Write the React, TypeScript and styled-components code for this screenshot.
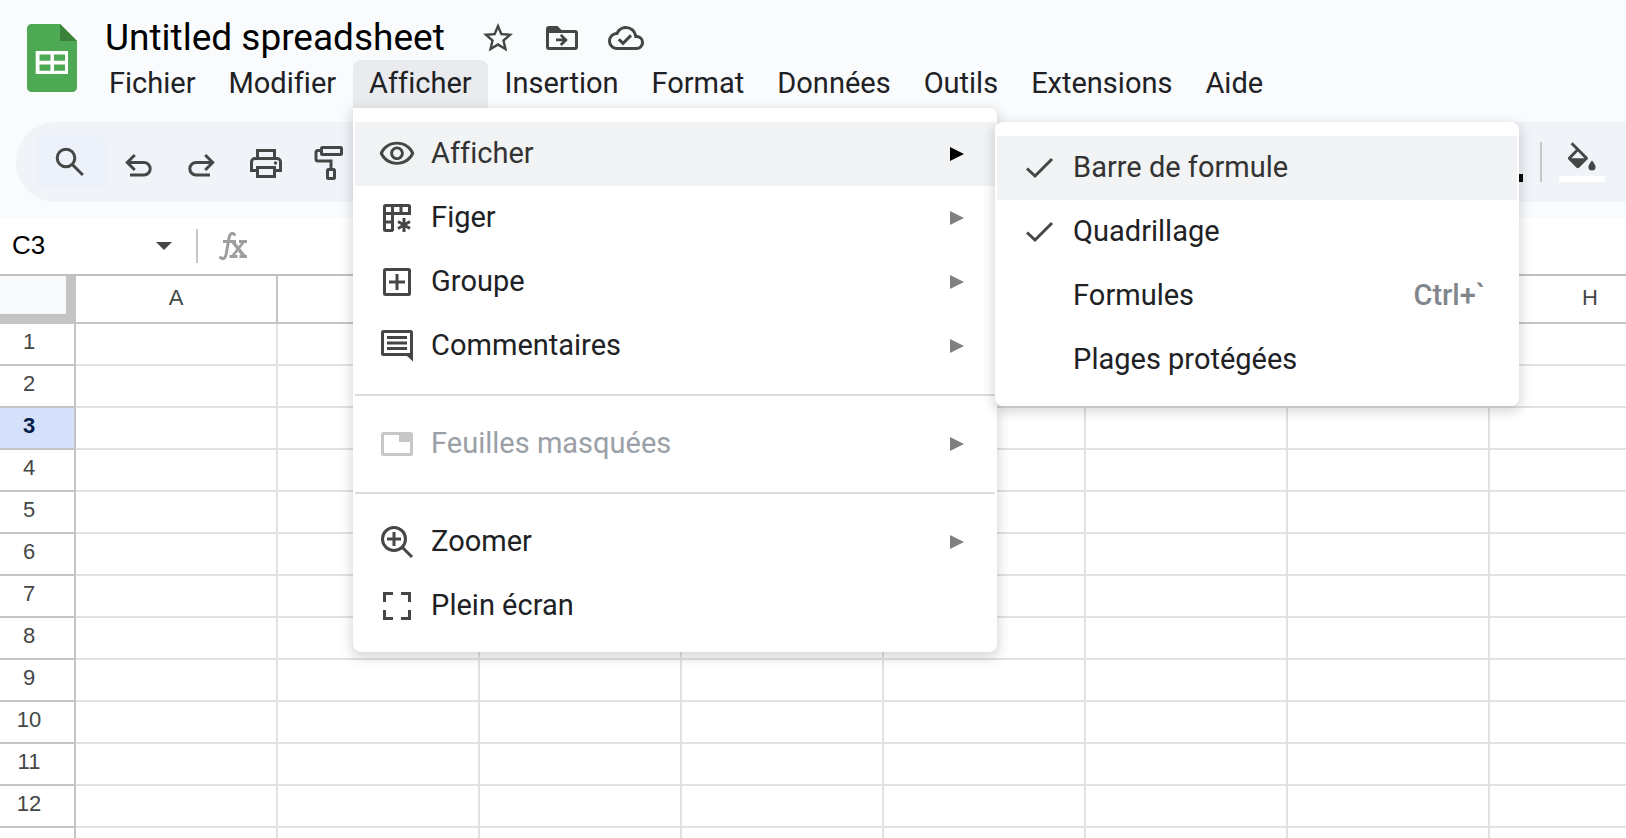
import React from "react";
import styled, { createGlobalStyle } from "styled-components";

const GlobalStyle = createGlobalStyle`
  *, *::before, *::after { box-sizing: border-box; }
  html, body, #root { height: 100%; }
  body {
    margin: 0;
    overflow: hidden;
    background: #ffffff;
    color: #202124;
    font-family: Roboto, "Liberation Sans", Arial, sans-serif;
    font-variant-ligatures: none;
  }
  button, input { font: inherit; color: inherit; font-variant-ligatures: none; }
  button { border: 0; padding: 0; background: none; cursor: pointer; }
  svg { display: block; flex: none; }
`;

const Page = styled.div`
  display: flex;
  flex-direction: column;
  height: 100%;
  overflow: hidden;
`;

const Header = styled.header`
  display: flex;
  align-items: flex-start;
  height: 108px;
  flex: none;
  background: #f9fbfd;
`;

const LogoLink = styled.a`
  display: block;
  padding: 24px 0 0 27px;
  width: 93px;
  flex: none;
`;

const HeaderMain = styled.div`
  display: flex;
  flex-direction: column;
  flex: 1;
  min-width: 0;
`;

const TitleRow = styled.div`
  display: flex;
  align-items: center;
  height: 60px;
  padding: 16px 0 0 12px;
`;

const TitleInput = styled.input`
  width: 366px;
  height: 44px;
  padding: 0;
  border: 0;
  outline: 0;
  background: transparent;
  color: #000000;
  font-size: 37px;
  line-height: 44px;
`;

const TitleActions = styled.div`
  display: flex;
  gap: 28px;
  margin-left: 9px;
  color: #444746;
`;

const MenuBar = styled.nav`
  display: flex;
  gap: 1px;
  height: 48px;
`;

const MenuSlot = styled.div`
  position: relative;
`;

const MenuTab = styled.button<{ $open?: boolean }>`
  height: 48px;
  padding: 0 16px 2px;
  border-radius: 8px 8px 0 0;
  background: ${(p) => (p.$open ? "#e9ebee" : "transparent")};
  font-size: 29px;
  line-height: 44px;
  white-space: nowrap;
`;

const Popup = styled.div<{ $sub?: boolean }>`
  position: absolute;
  z-index: ${(p) => (p.$sub ? 3 : 2)};
  top: ${(p) => (p.$sub ? "14px" : "100%")};
  left: ${(p) => (p.$sub ? "calc(100% - 2px)" : "0")};
  width: ${(p) => (p.$sub ? "524px" : "644px")};
  padding: 14px 2px;
  border-radius: ${(p) => (p.$sub ? "8px" : "0 8px 8px 8px")};
  background: #ffffff;
  box-shadow: 0 4px 12px 2px rgba(60, 64, 67, 0.2);
`;

const Item = styled.button<{ $active?: boolean; $sub?: boolean }>`
  display: flex;
  align-items: center;
  width: 100%;
  height: 64px;
  padding: ${(p) => (p.$sub ? "0 32px 0 24px" : "0 31px 0 24px")};
  background: ${(p) => (p.$active ? "#f1f3f4" : "transparent")};
  color: ${(p) => (p.$active ? "#333333" : "#202124")};
  font-size: 29px;
  line-height: 36px;
  text-align: left;

  &:disabled { color: #9aa0a6; cursor: default; }
`;

const ItemIcon = styled.span<{ $dim?: boolean }>`
  display: flex;
  justify-content: center;
  width: 36px;
  margin-right: 16px;
  color: ${(p) => (p.$dim ? "#c7c7c7" : "#444746")};
`;

const ItemLabel = styled.span`
  flex: 1;
  padding-bottom: 2px;
`;

const Shortcut = styled.span`
  padding-bottom: 2px;
  color: #80868b;
  font-weight: 500;
`;

const Separator = styled.hr`
  height: 2px;
  margin: 16px 0;
  border: 0;
  background: #dadce0;
`;

const ToolbarBand = styled.div`
  flex: none;
  padding: 14px 0 16px 16px;
  background: #f9fbfd;
`;

const Toolbar = styled.div`
  display: flex;
  align-items: center;
  height: 80px;
  padding: 0 21px 0 20px;
  border-radius: 40px 0 0 40px;
  background: #f0f4f9;
  color: #444746;
`;

const SearchButton = styled.button`
  display: flex;
  align-items: center;
  justify-content: center;
  width: 70px;
  height: 54px;
  border-radius: 6px;
  background: #edf2fa;
`;

const ToolButton = styled.button`
  display: flex;
  align-items: center;
  justify-content: center;
  width: 64px;
  height: 54px;
`;

const Spacer = styled.div`
  flex: 1;
`;

const SwatchButton = styled.button`
  display: flex;
  flex-direction: column;
  justify-content: flex-end;
  align-items: center;
  gap: 4px;
  width: 46px;
  height: 40px;
`;

const Swatch = styled.span<{ $color: string }>`
  width: 100%;
  height: 8px;
  background: ${(p) => p.$color};
`;

const Divider = styled.span<{ $size: number; $before: number; $after: number }>`
  width: 2px;
  height: ${(p) => p.$size}px;
  margin: 0 ${(p) => p.$after}px 0 ${(p) => p.$before}px;
  background: #c7c7c7;
`;

const FormulaBar = styled.div`
  display: flex;
  align-items: center;
  flex: none;
  height: 58px;
  border-bottom: 2px solid #c0c0c0;
  background: #ffffff;
`;

const NameBox = styled.input`
  width: 144px;
  height: 40px;
  padding: 0 0 2px 12px;
  border: 0;
  outline: 0;
  color: #000000;
  font-family: "Liberation Sans", Arial, sans-serif;
  font-size: 26px;
  line-height: 38px;
`;

const NameBoxToggle = styled.button`
  display: flex;
  align-items: center;
  justify-content: center;
  width: 40px;
  height: 40px;
  color: #444746;
`;

const FormulaInput = styled.input`
  flex: 1;
  min-width: 0;
  height: 40px;
  margin-left: 16px;
  padding: 0;
  border: 0;
  outline: 0;
  font-size: 26px;
`;

const GridArea = styled.main`
  flex: 1;
  min-height: 0;
  overflow: hidden;
`;

const Grid = styled.table`
  width: 1692px;
  table-layout: fixed;
  border-collapse: separate;
  border-spacing: 0;
  font-family: "Liberation Sans", Arial, sans-serif;
  font-size: 22px;
  line-height: 24px;
  color: #444746;
`;

const CornerCell = styled.td`
  width: 76px;
  height: 48px;
  padding: 0;
  border-right: 10px solid #c4c4c4;
  border-bottom: 10px solid #c4c4c4;
  background: #f8f9fa;
`;

const ColumnHead = styled.th`
  width: 202px;
  height: 48px;
  padding: 0 0 2px;
  border-right: 2px solid #c4c4c4;
  border-bottom: 2px solid #c4c4c4;
  font-weight: 400;
`;

const RowHead = styled.th<{ $selected?: boolean }>`
  height: 42px;
  padding: 0 16px 4px 0;
  border-right: 2px solid #c4c4c4;
  border-bottom: 2px solid #c4c4c4;
  background: ${(p) => (p.$selected ? "#d5e1fb" : "#ffffff")};
  color: ${(p) => (p.$selected ? "#041e49" : "#444746")};
  font-weight: ${(p) => (p.$selected ? 700 : 400)};
`;

const Cell = styled.td`
  padding: 0;
  border-right: 2px solid #e1e1e1;
  border-bottom: 2px solid #e1e1e1;
`;

type IconProps = { size?: number; box?: number; children: React.ReactNode };

const Icon = ({ size = 36, box = 36, children }: IconProps) => (
  <svg width={size} height={size} viewBox={`0 0 ${box} ${box}`} fill="currentColor" aria-hidden="true">
    {children}
  </svg>
);

const Lines = ({ children, width = 3 }: { children: React.ReactNode; width?: number }) => (
  <g fill="none" stroke="currentColor" strokeWidth={width}>
    {children}
  </g>
);

const SheetsLogo = () => (
  <svg width="50" height="68" viewBox="0 0 50 68" aria-hidden="true">
    <path fill="#4ea955" d="M4.500 0H33L50 17V63.500A4.500 4.500 0 0 1 45.500 68H4.500A4.500 4.500 0 0 1 0 63.500V4.500A4.500 4.500 0 0 1 4.500 0Z" />
    <path fill="#3b8139" d="M33 0L50 17H33Z" />
    <path fill="#fff" fillRule="evenodd" d="M8.700 27H41V50H8.700ZM12.500 30.500V36.700H23.500V30.500ZM27 30.500V36.700H38V30.500ZM12.500 40.500V46.700H23.500V40.500ZM27 40.500V46.700H38V40.500Z" />
  </svg>
);

const StarIcon = () => (
  <Icon box={24}>
    <path d="M22 9.240l-7.190-.62L12 2 9.190 8.630 2 9.240l5.460 4.730L5.820 21 12 17.270 18.180 21l-1.630-7.030L22 9.240zM12 15.400l-3.760 2.270 1-4.280-3.320-2.880 4.380-.38L12 6.100l1.710 4.040 4.380.38-3.320 2.880 1 4.280L12 15.400z" />
  </Icon>
);

const MoveIcon = () => (
  <Icon>
    <path fillRule="evenodd" d="M5 6H13.500L17.500 10H31A3 3 0 0 1 34 13V27A3 3 0 0 1 31 30H5A3 3 0 0 1 2 27V9A3 3 0 0 1 5 6ZM5 13V27H31V13Z" />
    <path d="M12 18.500H18.500L15.800 15.800L17.800 13.900L23.800 19.900L17.800 25.900L15.800 23.900L18.500 21.300H12Z" />
  </Icon>
);

const CloudIcon = () => (
  <Icon box={24}>
    <path d="M19.350 10.040A7.490 7.490 0 0 0 12 4C9.110 4 6.600 5.640 5.350 8.040A5.994 5.994 0 0 0 0 14c0 3.310 2.690 6 6 6h13c2.760 0 5-2.240 5-5 0-2.640-2.050-4.780-4.650-4.960zM19 18H6c-2.210 0-4-1.790-4-4 0-2.050 1.530-3.760 3.560-3.970l1.070-.11.500-.95A5.469 5.469 0 0 1 12 6c2.620 0 4.880 1.860 5.390 4.430l.3 1.500 1.530.11A2.980 2.980 0 0 1 22 15c0 1.650-1.350 3-3 3zm-9-3.820l-2.090-2.090L6.500 13.500 10 17l6.010-6.010-1.410-1.410z" />
  </Icon>
);

const SearchIcon = () => (
  <Icon>
    <Lines>
      <circle cx="13" cy="14" r="8.800" />
      <path d="M19.300 20.500L29.800 31" />
    </Lines>
  </Icon>
);

const UndoIcon = () => (
  <Icon>
    <Lines>
      <path d="M7.500 18.500H24A6.200 6.200 0 0 1 24 30.900H10" />
      <path d="M14.800 11L7.300 18.500L14.800 26" />
    </Lines>
  </Icon>
);

const RedoIcon = () => (
  <Icon>
    <Lines>
      <path d="M28.500 18.500H12A6.200 6.200 0 0 0 12 30.900H26" />
      <path d="M21.200 11L28.700 18.500L21.200 26" />
    </Lines>
  </Icon>
);

const PrintIcon = () => (
  <Icon>
    <Lines>
      <path d="M9.500 14V6.500H26.500V14" />
      <path d="M9.500 26.500H3.500V18A3.500 3.500 0 0 1 7 14.500H29A3.500 3.500 0 0 1 32.500 18V26.500H26.500" />
      <path d="M9.500 23.500H26.500V32.500H9.500Z" />
    </Lines>
    <circle cx="27.500" cy="19" r="1.700" />
  </Icon>
);

const PaintIcon = () => (
  <Icon>
    <Lines>
      <rect x="9.500" y="3.500" width="20" height="7" rx="1" />
      <path d="M9 6.500H6A2 2 0 0 0 4 8.500V15A2 2 0 0 0 6 17H19V25" />
      <rect x="15.500" y="25.500" width="7" height="9" rx="1" />
    </Lines>
  </Icon>
);

const FillIcon = () => (
  <svg width="30" height="30" viewBox="0 0 30 30" fill="currentColor" aria-hidden="true">
    <path fillRule="evenodd" d="M3.600 2.300L5.600 .300L20.600 15.300Q21.500 16.300 20.600 17.300L12.300 25.600Q10.800 26.800 9.300 25.600L1.200 17.300Q.300 16.300 1.200 15.300L8.900 7.500ZM10.900 9.600L4.400 16.200H17.400Z" />
    <path d="M25 18.500C26.500 20.500 28.600 23 28.600 25A3.600 3.600 0 0 1 21.400 25C21.400 23 23.500 20.500 25 18.500Z" />
  </svg>
);

const EyeIcon = () => (
  <Icon size={38} box={24}>
    <path d="M12 6c3.790 0 7.170 2.130 8.820 5.500C19.170 14.870 15.790 17 12 17s-7.170-2.130-8.820-5.500C4.830 8.130 8.210 6 12 6m0-1.800C7 4.200 2.730 7.110 1 11.500 2.730 15.890 7 18.800 12 18.800s9.270-2.910 11-7.300C21.270 7.110 17 4.200 12 4.200zm0 4.800c1.380 0 2.500 1.120 2.500 2.500S13.380 14 12 14s-2.500-1.120-2.500-2.500S10.620 9 12 9m0-1.800c-2.370 0-4.300 1.930-4.300 4.300S9.630 15.800 12 15.800s4.300-1.930 4.300-4.300S14.370 7.200 12 7.200z" />
  </Icon>
);

const FreezeIcon = () => (
  <Icon>
    <Lines>
      <path d="M14 30.500H6.500A1 1 0 0 1 5.500 29.500V6.500A1 1 0 0 1 6.500 5.500H29.500A1 1 0 0 1 30.500 6.500V13.500H13.500V31M4 13.500H14M13.500 5V14M22 5V14M4 22H14" />
      <path d="M25 18V32M19 21.500L31 28.500M31 21.500L19 28.500" />
    </Lines>
  </Icon>
);

const GroupIcon = () => (
  <Icon>
    <Lines>
      <rect x="5.500" y="5.500" width="25" height="25" rx="1" />
      <path d="M10 18H26M18 10V26" />
    </Lines>
  </Icon>
);

const CommentIcon = () => (
  <Icon>
    <path fillRule="evenodd" d="M4.500 2H31.500A2.500 2.500 0 0 1 34 4.500V33.500L28 28H4.500A2.500 2.500 0 0 1 2 25.500V4.500A2.500 2.500 0 0 1 4.500 2ZM5 5V25H31V5Z" />
    <path d="M8 8H28V11H8ZM8 13.500H28V16.500H8ZM8 19H28V22H8Z" />
  </Icon>
);

const HiddenSheetIcon = () => (
  <Icon>
    <path fillRule="evenodd" d="M4.500 6H31.500A2.500 2.500 0 0 1 34 8.500V27.500A2.500 2.500 0 0 1 31.500 30H4.500A2.500 2.500 0 0 1 2 27.500V8.500A2.500 2.500 0 0 1 4.500 6ZM5 9V27H31V16H20V9Z" />
  </Icon>
);

const ZoomIcon = () => (
  <Icon>
    <Lines>
      <circle cx="15" cy="15" r="11.500" />
      <path d="M23 23L33 33M8 15H22M15 8V22" />
    </Lines>
  </Icon>
);

const FullscreenIcon = () => (
  <Icon>
    <Lines>
      <path d="M5.500 14V5.500H14M22 5.500H30.500V14M30.500 22V30.500H22M14 30.500H5.500V22" />
    </Lines>
  </Icon>
);

const CheckIcon = () => (
  <Icon>
    <Lines>
      <path d="M6 18.500L14 26L31 9" />
    </Lines>
  </Icon>
);

const ArrowIcon = ({ color }: { color: string }) => (
  <svg width="14" height="14" viewBox="0 0 14 14" aria-hidden="true">
    <path fill={color} d="M0 0L14 7L0 14Z" />
  </svg>
);

const FxIcon = () => (
  <svg width="30" height="30" viewBox="0 0 30 30" fill="none" stroke="#9e9e9e" aria-hidden="true">
    <path strokeWidth="3" strokeLinecap="round" d="M2.500 26.500C5.500 29 7.500 27 8.200 23L11 7C11.700 2.500 14.300 1.200 16.500 3.500" />
    <path strokeWidth="3" d="M5 10.500H18M21 10.500H29M11.500 25.500H19.500M21.500 25.500H29" />
    <path strokeWidth="3.600" d="M15 11L26 25" />
    <path strokeWidth="2.800" d="M25.500 11L14.500 25" />
  </svg>
);

const viewItems = [
  [
    { label: "Afficher", icon: <EyeIcon />, arrow: true, active: true },
    { label: "Figer", icon: <FreezeIcon />, arrow: true },
    { label: "Groupe", icon: <GroupIcon />, arrow: true },
    { label: "Commentaires", icon: <CommentIcon />, arrow: true },
  ],
  [{ label: "Feuilles masquées", icon: <HiddenSheetIcon />, arrow: true, disabled: true }],
  [
    { label: "Zoomer", icon: <ZoomIcon />, arrow: true },
    { label: "Plein écran", icon: <FullscreenIcon /> },
  ],
] as { label: string; icon: React.ReactNode; arrow?: boolean; active?: boolean; disabled?: boolean }[][];

const showItems = [
  { label: "Barre de formule", checked: true, active: true },
  { label: "Quadrillage", checked: true },
  { label: "Formules", shortcut: "Ctrl+`" },
  { label: "Plages protégées" },
] as { label: string; checked?: boolean; active?: boolean; shortcut?: string }[];

const menus = ["Fichier", "Modifier", "Afficher", "Insertion", "Format", "Données", "Outils", "Extensions", "Aide"];
const columns = ["A", "B", "C", "D", "E", "F", "G", "H"];
const rows = Array.from({ length: 12 }, (_, i) => i + 1);
const selectedRow = 3;

const ShowSubmenu = () => (
  <Popup $sub role="menu" aria-label="Afficher">
    {showItems.map((item) => (
      <Item key={item.label} $sub $active={item.active} role="menuitemcheckbox" aria-checked={!!item.checked}>
        <ItemIcon>{item.checked && <CheckIcon />}</ItemIcon>
        <ItemLabel>{item.label}</ItemLabel>
        {item.shortcut && <Shortcut>{item.shortcut}</Shortcut>}
      </Item>
    ))}
  </Popup>
);

const ViewMenu = () => (
  <Popup role="menu" aria-label="Afficher">
    {viewItems.map((group, index) => (
      <React.Fragment key={index}>
        {index > 0 && <Separator />}
        {group.map((item) => (
          <Item key={item.label} $active={item.active} disabled={item.disabled} role="menuitem">
            <ItemIcon $dim={item.disabled}>{item.icon}</ItemIcon>
            <ItemLabel>{item.label}</ItemLabel>
            {item.arrow && <ArrowIcon color={item.active ? "#000000" : "#808080"} />}
          </Item>
        ))}
      </React.Fragment>
    ))}
    <ShowSubmenu />
  </Popup>
);

export default function App() {
  return (
    <Page>
      <GlobalStyle />
      <Header>
        <LogoLink href="#" aria-label="Sheets">
          <SheetsLogo />
        </LogoLink>
        <HeaderMain>
          <TitleRow>
            <TitleInput aria-label="Title" defaultValue="Untitled spreadsheet" />
            <TitleActions>
              <button aria-label="Star"><StarIcon /></button>
              <button aria-label="Move"><MoveIcon /></button>
              <button aria-label="Status"><CloudIcon /></button>
            </TitleActions>
          </TitleRow>
          <MenuBar>
            {menus.map((name) => (
              <MenuSlot key={name}>
                <MenuTab $open={name === "Afficher"}>{name}</MenuTab>
                {name === "Afficher" && <ViewMenu />}
              </MenuSlot>
            ))}
          </MenuBar>
        </HeaderMain>
      </Header>
      <ToolbarBand>
        <Toolbar role="toolbar">
          <SearchButton aria-label="Search"><SearchIcon /></SearchButton>
          <ToolButton aria-label="Undo"><UndoIcon /></ToolButton>
          <ToolButton aria-label="Redo"><RedoIcon /></ToolButton>
          <ToolButton aria-label="Print"><PrintIcon /></ToolButton>
          <ToolButton aria-label="Paint format"><PaintIcon /></ToolButton>
          <Spacer />
          <SwatchButton aria-label="Text color"><Swatch $color="#000000" /></SwatchButton>
          <Divider $size={40} $before={17} $after={17} />
          <SwatchButton aria-label="Fill color">
            <FillIcon />
            <Swatch $color="#ffffff" />
          </SwatchButton>
        </Toolbar>
      </ToolbarBand>
      <FormulaBar>
        <NameBox aria-label="Name box" defaultValue="C3" />
        <NameBoxToggle aria-label="Named ranges">
          <svg width="16" height="8" viewBox="0 0 16 8" aria-hidden="true">
            <path fill="currentColor" d="M0 0H16L8 8Z" />
          </svg>
        </NameBoxToggle>
        <Divider $size={34} $before={12} $after={20} />
        <FxIcon />
        <FormulaInput aria-label="Formula" />
      </FormulaBar>
      <GridArea>
        <Grid>
          <thead>
            <tr>
              <CornerCell />
              {columns.map((c) => (
                <ColumnHead key={c} scope="col">{c}</ColumnHead>
              ))}
            </tr>
          </thead>
          <tbody>
            {rows.map((r) => (
              <tr key={r}>
                <RowHead scope="row" $selected={r === selectedRow}>{r}</RowHead>
                {columns.map((c) => (
                  <Cell key={c} />
                ))}
              </tr>
            ))}
            <tr>
              <RowHead />
              {columns.map((c) => (
                <Cell key={c} />
              ))}
            </tr>
          </tbody>
        </Grid>
      </GridArea>
    </Page>
  );
}
